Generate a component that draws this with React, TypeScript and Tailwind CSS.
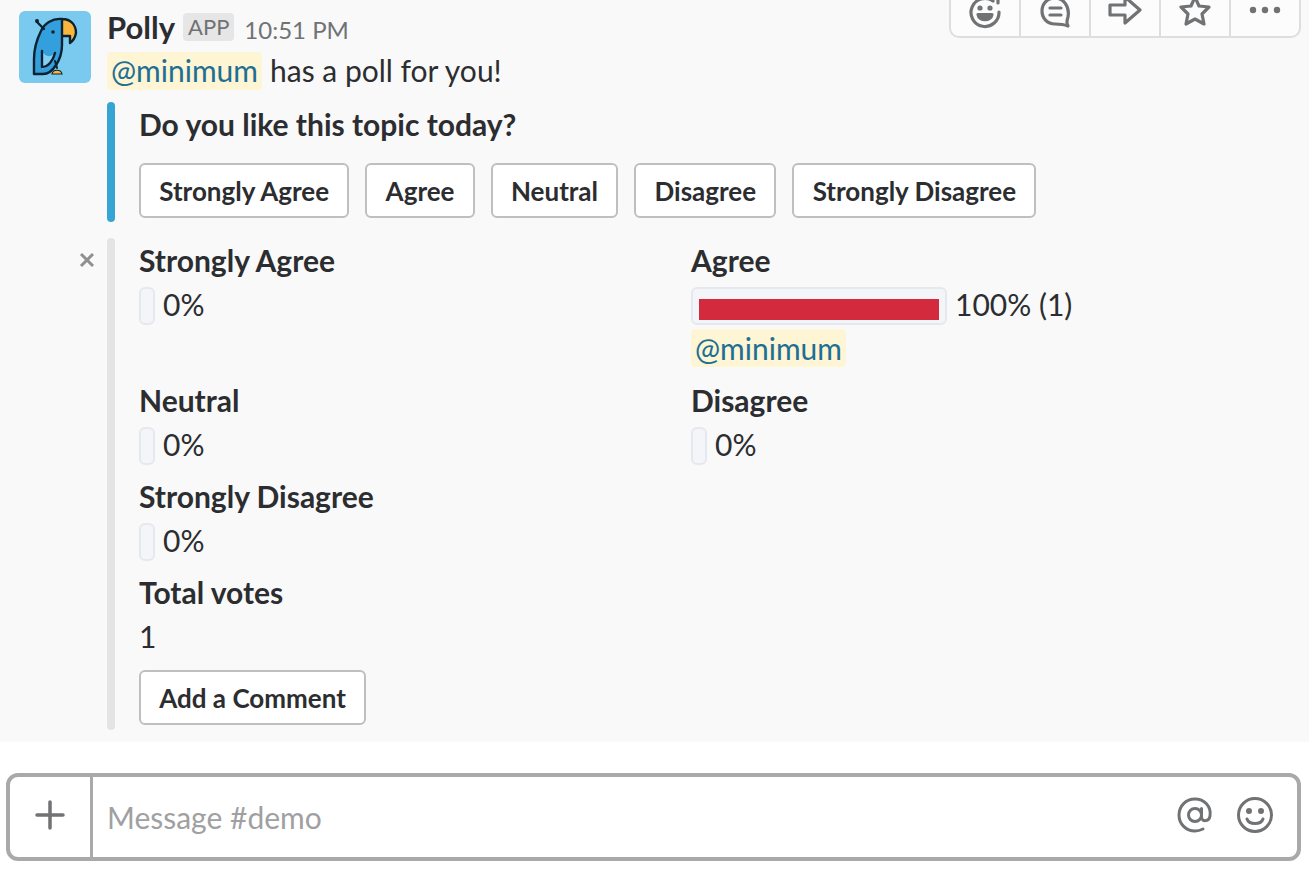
import { ReactNode } from 'react';

const font = { fontFamily: 'Lato, "Open Sans", sans-serif' };

function Parrot() {
  return (
    <svg viewBox="0 0 72 72" className="h-[72px] w-[72px]" fill="none">
      <path d="M43 8C33 7 25 13 22 20C17 30 15 38 15 48L15 63L24 63C34 63 43 48 43 34Z" fill="#339fdc" />
      <path d="M43 8C52 8 57 14 57 22C56 27 54 30 51 32L51 25L43 25Z" fill="#f8b63d" />
      <path d="M23 40L23 58C29 56 34 50 36 42C32 46 27 47 23 40Z" fill="#86d0ef" />
      <path
        d="M43 8C33 7 25 13 22 20C17 30 15 38 15 48L15 63L24 63C34 63 43 48 43 34ZM43 8C52 8 57 14 57 22C56 27 54 30 51 32L51 25L43 25M23 40L23 56C29 56 34 50 36 42M18 11L25 18"
        stroke="#0d2230"
        strokeWidth="2.4"
        strokeLinecap="round"
        strokeLinejoin="round"
      />
      <circle cx="34" cy="21" r="1.8" fill="#0d2230" />
      <circle cx="18" cy="10" r="2" fill="#0d2230" />
      <path d="M36 50L38 57" stroke="#0d2230" strokeWidth="2" strokeLinecap="round" />
      <path d="M33 63C34 58 42 58 43 63Z" fill="#f8b63d" stroke="#0d2230" strokeWidth="1.2" />
    </svg>
  );
}

function ActionIcon({ children }: { children: ReactNode }) {
  return (
    <div className="flex h-full w-[70px] items-center justify-center border-r-2 border-[#dedede] pt-[4px] last:w-[68px] last:border-r-0">
      <svg viewBox="0 0 36 36" className="h-9 w-9" fill="none" stroke="#717274" strokeWidth="3.2" strokeLinecap="round" strokeLinejoin="round">
        {children}
      </svg>
    </div>
  );
}

function Toolbar() {
  return (
    <div className="absolute right-[8px] top-[-16px] flex h-[54px] items-end rounded-b-[10px] border-2 border-t-0 border-[#dedede] bg-[#fcfcfc]">
      <div className="flex h-[52px] w-[348px]">
        <ActionIcon>
          <path d="M26 7A14 14 0 1 0 32 18" />
          <path d="M31 1V9" />
          <circle cx="13" cy="14" r="1" fill="#717274" />
          <circle cx="23" cy="14" r="1" fill="#717274" />
          <path d="M11 20.5H25C24 27.5 12 27.5 11 20.5Z" fill="#717274" />
        </ActionIcon>
        <ActionIcon>
          <path d="M18 4C10 4 5 10 5 17C5 24 10 30 18 30C22 30 26 30 31 32C29 29 30 26 31 23C33 12 26 4 18 4Z" />
          <path d="M13 14H24M13 21H24" />
        </ActionIcon>
        <ActionIcon>
          <path d="M3 11H18V3L33 16L18 29V21H3Z" />
        </ActionIcon>
        <ActionIcon>
          <path d="M18 3L22 12L32 13L25 20L27 30L18 25L9 30L11 20L4 13L14 12Z" />
        </ActionIcon>
        <ActionIcon>
          <circle cx="6" cy="16" r="1.6" fill="#717274" />
          <circle cx="18" cy="16" r="1.6" fill="#717274" />
          <circle cx="30" cy="16" r="1.6" fill="#717274" />
        </ActionIcon>
      </div>
    </div>
  );
}

function Mention({ className = '' }: { className?: string }) {
  return (
    <span className={`flex h-[38px] items-center rounded-[4px] bg-[#fdf5d4] px-[4px] text-[#1d6f94] ${className}`}>@minimum</span>
  );
}

function PollButton({ label }: { label: string }) {
  return (
    <div className="flex h-[55px] items-center rounded-[6px] border-2 border-[#bfbfbf] bg-white px-[18.25px] pt-[1px] text-[26px] font-bold text-[#2c2d30]">
      {label}
    </div>
  );
}

function Field({ title, children }: { title: string; children: ReactNode }) {
  return (
    <div className="mb-[8px]">
      <div className="h-[44px] text-[30px] font-bold leading-[44px]">{title}</div>
      {children}
    </div>
  );
}

function EmptyBar() {
  return (
    <div className="flex h-[44px] items-center gap-[8px] leading-[44px]">
      <div className="mt-[5px] h-[38px] w-[16px] self-start rounded-[6px] border-2 border-[#e6e8ef] bg-[#f4f5f9]" />
      <span>0%</span>
    </div>
  );
}

export default function App() {
  const options = ['Strongly Agree', 'Agree', 'Neutral', 'Disagree', 'Strongly Disagree'];

  return (
    <div className="relative flex h-[869px] w-[1309px] flex-col overflow-hidden bg-white text-[30px] text-[#2c2d30]" style={font}>
      <div className="relative h-[742px] bg-[#f9f9f9] pl-[19px] pt-[11px]">
        <Toolbar />
        <div className="flex gap-[16px]">
          <div className="h-[72px] w-[72px] shrink-0 overflow-hidden rounded-[6px] bg-[#7ac9ee]">
            <Parrot />
          </div>
          <div className="flex-1">
            <div className="flex h-[32px] items-center leading-[32px]">
              <span className="text-[31px] font-bold">Polly</span>
              <span className="ml-[8px] rounded-[4px] bg-[#e6e6e6] px-[5px] text-[22px] leading-[28px] text-[#717274]">APP</span>
              <span className="ml-[10px] mt-[6px] text-[24px] text-[#717274]">10:51 PM</span>
            </div>
            <div className="mt-[6px] flex h-[44px] items-center leading-[44px]">
              <Mention className="pb-[2px]" />
              <span className="ml-[8px] pb-[2px]">has a poll for you!</span>
            </div>
            <div className="mt-[9px] flex h-[120px] gap-[24px]">
              <div className="w-[8px] rounded-[4px] bg-[#36a5d4]" />
              <div>
                <div className="h-[44px] font-bold leading-[44px]">Do you like this topic today?</div>
                <div className="mt-[17px] flex gap-[16px]">
                  {options.map((o) => (
                    <PollButton key={o} label={o} />
                  ))}
                </div>
              </div>
            </div>
            <div className="relative mt-[16px] flex h-[492px] gap-[24px]">
              <svg viewBox="0 0 16 16" className="absolute left-[-28px] top-[14px] h-4 w-4" stroke="#8f9092" strokeWidth="3">
                <path d="M2 2L14 14M14 2L2 14" />
              </svg>
              <div className="w-[8px] rounded-[4px] bg-[#e4e4e4]" />
              <div className="w-[1100px]">
                <div className="grid grid-cols-[552px_1fr]">
                  <Field title="Strongly Agree">
                    <EmptyBar />
                  </Field>
                  <Field title="Agree">
                    <div className="flex h-[44px] items-center gap-[8px]">
                      <div className="mt-[5px] flex h-[38px] w-[256px] items-center self-start rounded-[6px] border-2 border-[#e6e8ef] bg-[#f4f5f9] px-[6px] pt-[7px]">
                        <div className="h-[21px] w-full bg-[#d32a3e]" />
                      </div>
                      <span>100% (1)</span>
                    </div>
                    <div className="flex h-[44px] items-center">
                      <Mention />
                    </div>
                  </Field>
                  <Field title="Neutral">
                    <EmptyBar />
                  </Field>
                  <Field title="Disagree">
                    <EmptyBar />
                  </Field>
                  <Field title="Strongly Disagree">
                    <EmptyBar />
                  </Field>
                </div>
                <div className="h-[44px] font-bold leading-[44px]">Total votes</div>
                <div className="h-[44px] leading-[44px]">1</div>
                <div className="mt-[12px] flex">
                  <PollButton label="Add a Comment" />
                </div>
              </div>
            </div>
          </div>
        </div>
      </div>

      <div className="ml-[6px] mr-[8px] mt-[31px] flex h-[88px] items-stretch rounded-[12px] border-[4px] border-[#a9a9aa] bg-white">
        <div className="flex w-[83px] items-center justify-center border-r-[3px] border-[#a9a9aa] pb-[4px]">
          <svg viewBox="0 0 30 30" className="h-[30px] w-[30px]" stroke="#717274" strokeWidth="3.5" strokeLinecap="round">
            <path d="M15 2V28M2 15H28" />
          </svg>
        </div>
        <div className="flex-1 pl-[14px] leading-[80px] text-[#a0a0a2]">Message #demo</div>
        <div className="flex items-center gap-[24px] pb-[4px] pr-[24px]">
          <svg viewBox="0 0 36 36" className="h-9 w-9" fill="none" stroke="#717274" strokeWidth="3" strokeLinecap="round">
            <circle cx="18" cy="18" r="6.5" />
            <path d="M24.5 11.5V20C24.5 25 32 25 33 19C34.5 9 27 2 18 2C9 2 2 9 2 18C2 27 9 34 18 34C21 34 24 33 26 32" />
          </svg>
          <svg viewBox="0 0 36 36" className="h-9 w-9" fill="none" stroke="#717274" strokeWidth="3" strokeLinecap="round">
            <circle cx="18" cy="18" r="16.5" />
            <circle cx="12" cy="14" r="1.5" fill="#717274" />
            <circle cx="24" cy="14" r="1.5" fill="#717274" />
            <path d="M10 22C12 28 24 28 26 22" />
          </svg>
        </div>
      </div>
    </div>
  );
}
